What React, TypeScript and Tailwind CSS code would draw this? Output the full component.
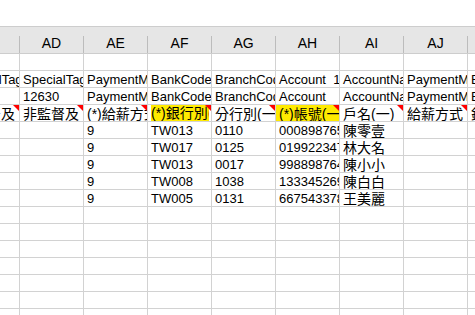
import React from 'react';

type Cell = { text?: string; big?: boolean; note?: boolean; hl?: 'text' | 'cell' };

const COLS = ['AC', 'AD', 'AE', 'AF', 'AG', 'AH', 'AI', 'AJ', 'AK'];

const t = (text: string): Cell => ({ text });
const zh = (text: string, hl?: 'text' | 'cell'): Cell => ({ text, big: true, note: true, hl });
const name = (text: string): Cell => ({ text, big: true });

const dataRow = (bank: string, branch: string, acct: string, who: string): Cell[] => [
  {}, {}, t('9'), t(bank), t(branch), t(acct), name(who), {}, {},
];

const ROWS: Cell[][] = [
  [],
  [t('SpecialTag'), t('SpecialTag'), t('PaymentMethod'), t('BankCode'), t('BranchCode'), t('Account  1'), t('AccountName'), t('PaymentMethod'), t('BankName')],
  [{}, t('12630'), t('PaymentMethod'), t('BankCode'), t('BranchCode'), t('Account'), t('AccountName'), t('PaymentMethod'), t('BankName')],
  [zh('非監督及'), zh('非監督及'), zh('(*)給薪方式'), zh('(*)銀行別(一)', 'text'), zh('分行別(一)'), zh('(*)帳號(一)', 'cell'), zh('戶名(一)'), zh('給薪方式'), zh('銀行名稱')],
  dataRow('TW013', '0110', '0008987654321', '陳零壹'),
  dataRow('TW017', '0125', '0199223476543', '林大名'),
  dataRow('TW013', '0017', '9988987643210', '陳小小'),
  dataRow('TW008', '1038', '1333452698765', '陳白白'),
  dataRow('TW005', '0131', '6675433787654', '王美麗'),
  [], [], [], [], [], [], [], [],
];

function GridCell({ cell }: { cell: Cell }) {
  const size = cell.big ? 'text-[14px]' : 'text-[13px]';
  return (
    <div
      className={`relative w-[64px] h-[17px] shrink-0 overflow-hidden whitespace-pre border-r border-b border-[#d2d2d2] ${
        cell.hl === 'cell' ? 'bg-[#ffea00]' : ''
      }`}
    >
      {cell.hl === 'text' ? (
        <div className={`ml-[3px] mr-[2px] h-full bg-[#ffea00] overflow-hidden leading-[16px] ${size}`}>{cell.text}</div>
      ) : (
        <div className={`px-[3px] pt-[1px] leading-[16px] ${size}`}>{cell.text}</div>
      )}
      {cell.note && (
        <div className="absolute right-0 top-0 w-0 h-0 border-l-[6px] border-l-transparent border-t-[6px] border-t-[#ff0000]" />
      )}
    </div>
  );
}

export default function App() {
  return (
    <div className="w-[475px] h-[315px] overflow-hidden bg-white text-black font-['Liberation_Sans','Noto_Sans_CJK_TC',sans-serif]">
      <div className="h-[26px]" />
      <div className="-ml-[44px]">
        <div className="flex h-[28px] bg-[#e6e6e6] border-t border-b border-[#cdcdcd]">
          {COLS.map(c => (
            <div key={c} className="w-[64px] shrink-0 flex items-end">
              <div className="w-full h-[17px] border-r border-[#bcbcbc] text-center text-[14px] leading-[15px]">{c}</div>
            </div>
          ))}
        </div>
        {ROWS.map((row, i) => (
          <div key={i} className="flex">
            {COLS.map((c, j) => (
              <GridCell key={c} cell={row[j] || {}} />
            ))}
          </div>
        ))}
      </div>
    </div>
  );
}
